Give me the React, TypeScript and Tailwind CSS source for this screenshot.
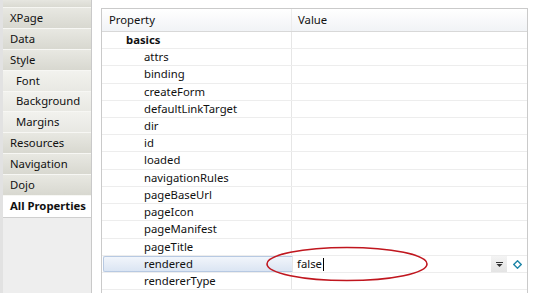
import React from "react";

const tabs: { label: string; sub?: boolean; h: string }[] = [
  { label: "XPage", h: "h-[21px]" },
  { label: "Data", h: "h-[21px]" },
  { label: "Style", h: "h-[21px]" },
  { label: "Font", sub: true, h: "h-[21px]" },
  { label: "Background", sub: true, h: "h-[20px]" },
  { label: "Margins", sub: true, h: "h-[21px]" },
  { label: "Resources", h: "h-[21px]" },
  { label: "Navigation", h: "h-[21px]" },
  { label: "Dojo", h: "h-[21px]" },
];

const rows: { label: string; h: string; bold?: boolean }[] = [
  { label: "basics", h: "h-[17px]", bold: true },
  { label: "attrs", h: "h-[17px]" },
  { label: "binding", h: "h-[18px]" },
  { label: "createForm", h: "h-[17px]" },
  { label: "defaultLinkTarget", h: "h-[17px]" },
  { label: "dir", h: "h-[17px]" },
  { label: "id", h: "h-[17px]" },
  { label: "loaded", h: "h-[18px]" },
  { label: "navigationRules", h: "h-[17px]" },
  { label: "pageBaseUrl", h: "h-[17px]" },
  { label: "pageIcon", h: "h-[17px]" },
  { label: "pageManifest", h: "h-[18px]" },
  { label: "pageTitle", h: "h-[17px]" },
  { label: "rendered", h: "h-[17px]" },
  { label: "rendererType", h: "h-[17px]" },
];

export default function App() {
  return (
    <div
      className="relative w-[540px] h-[293px] overflow-hidden bg-white flex text-[11.3px] text-[#111111]"
      style={{ fontFamily: '"Noto Sans", "Open Sans", sans-serif' }}
    >
      {/* Left tab panel */}
      <div className="w-[92px] h-full flex flex-col bg-[#e2e2e2] pl-[3px] border-r border-[#c9c9c9]">
        <div className="h-[8px] bg-gradient-to-b from-[#e6e6e0] to-[#dadad2] border-b border-[#f6f6f2]" />
        {tabs.map((t) => (
          <div
            key={t.label}
            className={`${t.h} flex items-center border-b border-[#f7f7f4] ${
              t.sub
                ? "pl-[13px] bg-gradient-to-b from-[#f2f2ee] to-[#e8e8e3]"
                : "pl-[7px] bg-gradient-to-b from-[#e8e8e2] to-[#d8d8d0]"
            }`}
          >
            {t.label}
          </div>
        ))}
        <div className="h-[21px] flex items-center pl-[7px] bg-white font-bold">
          All Properties
        </div>
        <div className="flex-1 bg-[#eeeeee] border-t border-[#cfcfcf]" />
      </div>

      {/* Right area */}
      <div className="flex-1 pl-[9px] pt-[8px] pr-[12px]">
        <div className="h-full border-l border-t border-r border-[#cacaca] flex flex-col">
          {/* Header */}
          <div className="h-[23px] flex border-b border-[#d8d8d8] bg-gradient-to-b from-white to-[#f1f3f6]">
            <div className="w-[190px] pl-[7px] flex items-center border-r border-[#ececec]">Property</div>
            <div className="flex-1 pl-[6px] flex items-center">Value</div>
          </div>
          {rows.map((r) => {
            const sel = r.label === "rendered";
            return (
              <div key={r.label} className={`${r.h} flex border-b border-[#ededed]`}>
                {sel ? (
                  <div className="w-[190px] flex items-center border-r border-[#e6e6e6] ml-[1px] rounded-l-[2px] border-l border-t border-b border-l-[#b7c9e2] border-t-[#b7c9e2] border-b-[#b7c9e2] bg-gradient-to-b from-[#f1f5fb] to-[#dbe5f3] pl-[40px]">
                    {r.label}
                  </div>
                ) : (
                  <div
                    className={`w-[190px] flex items-center border-r border-[#e6e6e6] ${
                      r.bold ? "pl-[24px] font-bold" : "pl-[42px]"
                    }`}
                  >
                    {r.label}
                  </div>
                )}
                {sel ? (
                  <div className="flex-1 flex items-center">
                    <div className="flex-1 h-full flex items-center pl-[4px] bg-white">
                      false<span className="inline-block w-[1px] h-[13px] bg-black ml-[1px]" />
                    </div>
                    <div className="w-[16px] h-full flex items-center justify-center bg-gradient-to-b from-[#f4f4f4] to-[#e4e4e4]">
                      <svg width="7" height="5" viewBox="0 0 7 5">
                        <rect x="0" y="0" width="7" height="1" fill="#333" />
                        <path d="M0.5 2 L6.5 2 L3.5 5 Z" fill="#333" />
                      </svg>
                    </div>
                    <div className="w-[20px] h-full flex items-center justify-center">
                      <svg width="9" height="9" viewBox="0 0 9 9">
                        <path d="M4.5 0.8 L8.2 4.5 L4.5 8.2 L0.8 4.5 Z" fill="none" stroke="#1f86a8" strokeWidth="1.4" />
                      </svg>
                    </div>
                  </div>
                ) : (
                  <div className="flex-1" />
                )}
              </div>
            );
          })}
        </div>
      </div>

      {/* Red ellipse annotation */}
      <svg className="absolute left-0 top-0 pointer-events-none" width="540" height="293">
        <ellipse cx="347" cy="264" rx="80" ry="16.5" fill="none" stroke="#c0161e" strokeWidth="1.6" />
      </svg>
    </div>
  );
}
